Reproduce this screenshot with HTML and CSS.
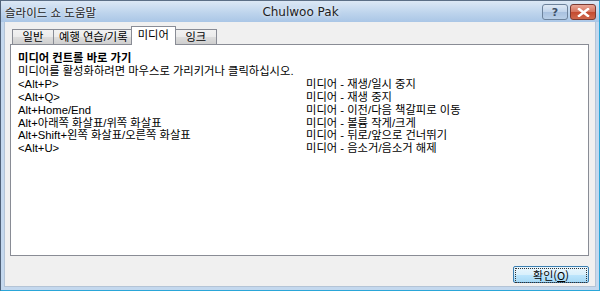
FILE: index.html
```html
<!DOCTYPE html>
<html lang="ko">
<head>
    <meta charset="UTF-8">
    <title>슬라이드 쇼 도움말</title>
    <link rel="stylesheet" href="styles.css">
</head>
<body>
    <div class="window">
        <!-- Barra de título -->
        <div class="titlebar">
            <span class="title-left">슬라이드 쇼 도움말</span>
            <span class="title-center">Chulwoo Pak</span>
            <div class="title-buttons">
                <button class="tb-button help">?</button>
                <button class="tb-button close">
                    <svg width="13" height="9" viewBox="0 0 13 9">
                        <path d="M2 1 L11 8 M11 1 L2 8" stroke="#ffffff" stroke-width="2.4" stroke-linecap="square"/>
                    </svg>
                </button>
            </div>
        </div>

        <div class="client">
            <!-- Abas -->
            <div class="tabs">
                <div class="tab">일반</div>
                <div class="tab">예행 연습/기록</div>
                <div class="tab active">미디어</div>
                <div class="tab">잉크</div>
            </div>

            <div class="panel">
                <div class="heading">미디어 컨트롤 바로 가기</div>
                <div class="desc">미디어를 활성화하려면 마우스로 가리키거나 클릭하십시오.</div>
                <div class="shortcuts">
                    <div>&lt;Alt+P&gt;</div><div>미디어 - 재생/일시 중지</div>
                    <div>&lt;Alt+Q&gt;</div><div>미디어 - 재생 중지</div>
                    <div>Alt+Home/End</div><div>미디어 - 이전/다음 책갈피로 이동</div>
                    <div>Alt+아래쪽 화살표/위쪽 화살표</div><div>미디어 - 볼륨 작게/크게</div>
                    <div>Alt+Shift+왼쪽 화살표/오른쪽 화살표</div><div>미디어 - 뒤로/앞으로 건너뛰기</div>
                    <div>&lt;Alt+U&gt;</div><div>미디어 - 음소거/음소거 해제</div>
                </div>
            </div>

            <div class="footer">
                <button class="ok-button"><span class="focus">확인(<u>O</u>)</span></button>
            </div>
        </div>
    </div>
</body>
</html>
```

FILE: styles.css
```css
body {
    margin: 0;
    padding: 0;
    background-color: #ffffff;
    font-family: "Liberation Sans", "Noto Sans CJK KR", sans-serif;
    font-size: 11.3px;
    color: #000000;
}

/* Janela */
.window {
    width: 600px;
    height: 291px;
    box-sizing: border-box;
    display: flex;
    flex-direction: column;
    border-left: 1px solid #4f6178;
    border-top: 1px solid #5c6f86;
    border-right: 1px solid #2aa6d8;
    border-bottom: 1px solid #2aa6d8;
    background: #c4d8ee;
}

/* Barra de título */
.titlebar {
    height: 21px;
    display: grid;
    grid-template-columns: 1fr auto 1fr;
    align-items: center;
    padding: 0 3px 0 4px;
    background: linear-gradient(#dce8f5, #bcd3ec 60%, #aac6e6);
}

.title-left {
    font-family: "Noto Sans CJK KR", sans-serif;
    font-size: 11.5px;
    color: #1b1b1b;
    text-shadow: 0 0 3px #ffffff;
}

.title-center {
    font-family: "DejaVu Sans", sans-serif;
    font-size: 12px;
    color: #1e1e1e;
    text-shadow: 0 0 4px #ffffff;
}

.title-buttons {
    display: flex;
    justify-content: flex-end;
    gap: 2px;
    padding-top: 1px;
}

.tb-button {
    width: 26px;
    height: 16px;
    padding: 0;
    border: 1px solid #6d829b;
    border-radius: 3px;
    display: flex;
    align-items: center;
    justify-content: center;
    cursor: pointer;
}

.help {
    background: linear-gradient(#dfe9f5, #c0d3ea 50%, #a9c1df 51%, #b9cfe8);
    color: #3e4f66;
    font-family: "DejaVu Sans", sans-serif;
    font-size: 11px;
    font-weight: bold;
}

.close {
    border-color: #7a3a32;
    background: linear-gradient(#e9a797, #d5735e 50%, #c44a30 51%, #d0684c);
}

/* Área cliente */
.client {
    flex: 1;
    margin: 0 3px 3px 3px;
    background-color: #f0f0f0;
    border: 1px solid #b4c4d6;
    border-top: none;
    display: flex;
    flex-direction: column;
    padding: 0 4px 0 5px;
}

/* Abas */
.tabs {
    display: flex;
    align-items: flex-end;
    height: 22px;
    padding-left: 2px;
    position: relative;
    z-index: 1;
}

.tab {
    height: 14px;
    line-height: 14px;
    min-width: 30px;
    text-align: center;
    padding: 0 5px;
    border: 1px solid #898c95;
    border-bottom: none;
    margin-right: -1px;
    background: linear-gradient(#f2f2f2, #ebebeb 50%, #dddddd 51%, #cfcfcf);
}

.tab.active {
    height: 18px;
    margin: 0 -1px 0 -2px;
    padding: 0 6px;
    background: #ffffff;
    line-height: 16px;
    position: relative;
    top: 1px;
}

.panel {
    height: 212px;
    box-sizing: border-box;
    margin-right: 2px;
    border: 1px solid #898c95;
    background: #ffffff;
    padding: 7px 8px 0 7px;
    line-height: 12.7px;
}

.heading {
    font-weight: bold;
}

.desc {
    margin-bottom: 1px;
}

.shortcuts {
    display: grid;
    grid-template-columns: 288px 1fr;
}

/* Rodapé */
.footer {
    flex: 1;
    display: flex;
    justify-content: flex-end;
    align-items: flex-start;
    padding: 10px 2px 0 0;
}

.ok-button {
    width: 76px;
    height: 17px;
    padding: 1px;
    border: 1px solid #3c7fb1;
    border-radius: 2px;
    background: linear-gradient(#eaf6fd, #d9f0fc 50%, #bee6fd 51%, #a7d9f5);
    font-family: "Noto Sans CJK KR", sans-serif;
    font-size: 11px;
    color: #000000;
    cursor: pointer;
}

.focus {
    display: block;
    height: 13px;
    line-height: 13px;
    border: 1px dotted #333333;
}
```
